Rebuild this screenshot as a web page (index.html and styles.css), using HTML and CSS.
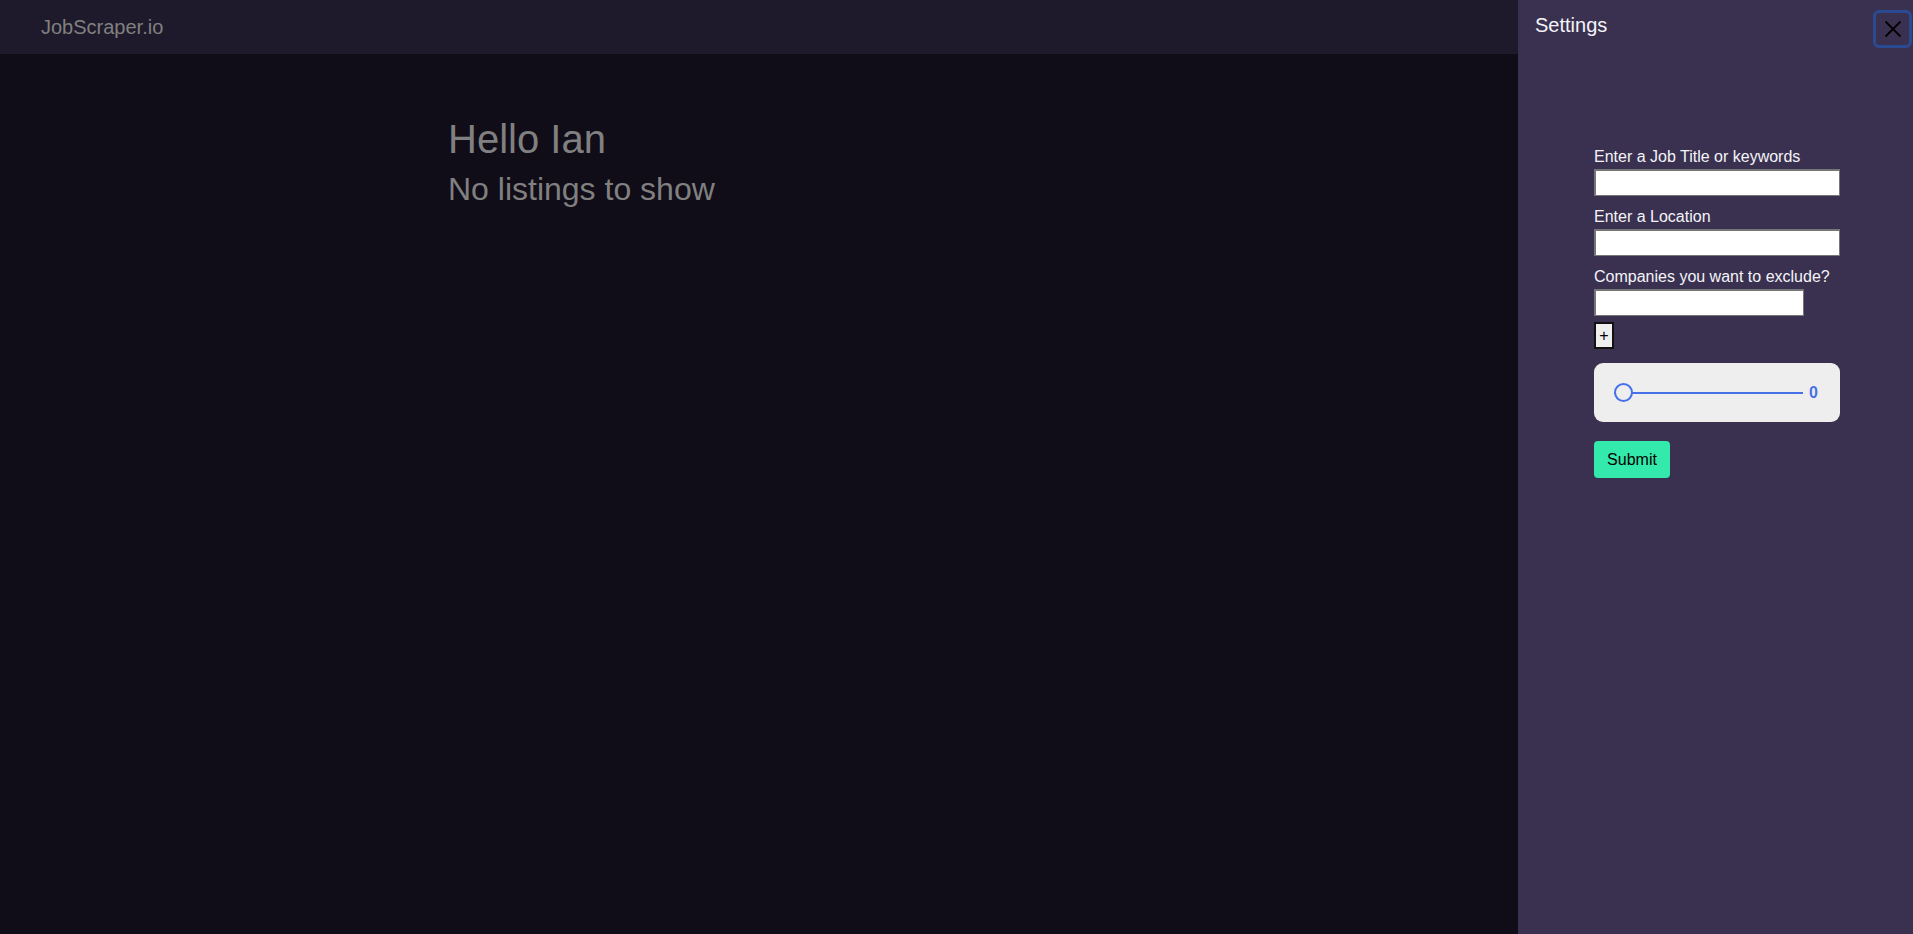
FILE: index.html
```html
<!DOCTYPE html>
<html lang="en">
<head>
<meta charset="utf-8">
<title>JobScraper.io</title>
<link rel="stylesheet" href="styles.css">
</head>
<body>
  <div class="app">
    <header class="topbar">
      <span class="logo">JobScraper.io</span>
    </header>
    <main class="main">
      <h1 class="hello">Hello Ian</h1>
      <h2 class="empty">No listings to show</h2>
    </main>
  </div>
  <aside class="drawer">
    <div class="drawer-head">
      <span class="drawer-title">Settings</span>
      <button class="close-btn" aria-label="Close">
        <svg width="18" height="18" viewBox="0 0 18 18"><path d="M1.5 1.5 L16.5 16.5 M16.5 1.5 L1.5 16.5" stroke="#000" stroke-width="1.8" fill="none"/></svg>
      </button>
    </div>
    <form class="settings-form">
      <label class="field-label">Enter a Job Title or keywords</label>
      <input class="text-input wide" type="text">
      <label class="field-label">Enter a Location</label>
      <input class="text-input wide" type="text">
      <label class="field-label">Companies you want to exclude?</label>
      <input class="text-input narrow" type="text">
      <button type="button" class="plus-btn">+</button>
      <div class="slider-box">
        <input class="range" type="range" min="0" max="100" value="0">
        <span class="range-value">0</span>
      </div>
      <button type="button" class="submit-btn">Submit</button>
    </form>
  </aside>
</body>
</html>
```

FILE: styles.css
```css
* { box-sizing: border-box; }
html, body {
  margin: 0;
  padding: 0;
  height: 100%;
}
body {
  background: #100d18;
  font-family: "Liberation Sans", Arial, sans-serif;
  overflow: hidden;
}
.app {
  min-height: 100vh;
  display: flex;
  flex-direction: column;
}
.topbar {
  height: 54px;
  background: #1e1a2b;
  display: flex;
  align-items: center;
  padding-left: 41px;
}
.logo {
  color: #808080;
  font-size: 20px;
  line-height: 23px;
  margin-top: 1px;
}
.main {
  padding: 62px 0 0 448px;
}
.hello {
  margin: 0;
  font-weight: normal;
  font-size: 40px;
  line-height: 46px;
  color: #808080;
}
.empty {
  margin: 9px 0 0;
  font-weight: normal;
  font-size: 32px;
  line-height: 37px;
  color: #808080;
}
.drawer {
  position: fixed;
  top: 0;
  right: 0;
  width: 395px;
  height: 100vh;
  background: #3a3150;
}
.drawer-head {
  display: flex;
  justify-content: space-between;
  align-items: flex-start;
  padding: 10px 1px 0 17px;
}
.drawer-title {
  color: #f4f4f8;
  font-size: 20px;
  line-height: 23px;
  margin-top: 4px;
}
.close-btn {
  width: 39px;
  height: 38px;
  padding: 0;
  border: 3px solid #2b4a92;
  border-radius: 6px;
  background: transparent;
  display: flex;
  align-items: center;
  justify-content: center;
}
.settings-form {
  display: flex;
  flex-direction: column;
  align-items: flex-start;
  width: 246px;
  margin: 100px 0 0 76px;
}
.field-label {
  color: #f4f4f8;
  font-size: 16px;
  line-height: 18px;
  margin-bottom: 3px;
}
.text-input {
  height: 27px;
  border: 1px solid #767676;
  border-top-width: 2px;
  border-left-width: 2px;
  background: #fff;
  margin: 0 0 12px;
  font-size: 16px;
}
.wide { width: 246px; }
.narrow { width: 210px; }
.narrow { margin-bottom: 0; }
.plus-btn {
  margin-top: 6px;
  width: 20px;
  height: 27px;
  padding: 0;
  border: 2px solid #111;
  background: #efefef;
  font-family: "Liberation Sans", Arial, sans-serif;
  font-size: 16px;
  line-height: 18px;
  color: #000;
}
.slider-box {
  margin-top: 14px;
  width: 246px;
  height: 59px;
  background: #eeeeee;
  border-radius: 9px;
  display: flex;
  align-items: center;
  padding-left: 20px;
}
.range {
  -webkit-appearance: none;
  appearance: none;
  width: 189px;
  height: 20px;
  margin: 0;
  background: transparent;
}
.range::-webkit-slider-runnable-track {
  height: 2px;
  background: #4870e8;
}
.range::-webkit-slider-thumb {
  -webkit-appearance: none;
  width: 19px;
  height: 19px;
  margin-top: -8.5px;
  border-radius: 50%;
  border: 2px solid #4870e8;
  background: #eeeeee;
}
.range-value {
  margin-left: 6px;
  color: #4870e8;
  font-weight: bold;
  font-size: 16px;
}
.submit-btn {
  margin-top: 19px;
  width: 76px;
  height: 37px;
  border: none;
  border-radius: 4px;
  background: #33e9ab;
  color: #000;
  font-family: "Liberation Sans", Arial, sans-serif;
  font-size: 16px;
  padding: 0;
}
```
